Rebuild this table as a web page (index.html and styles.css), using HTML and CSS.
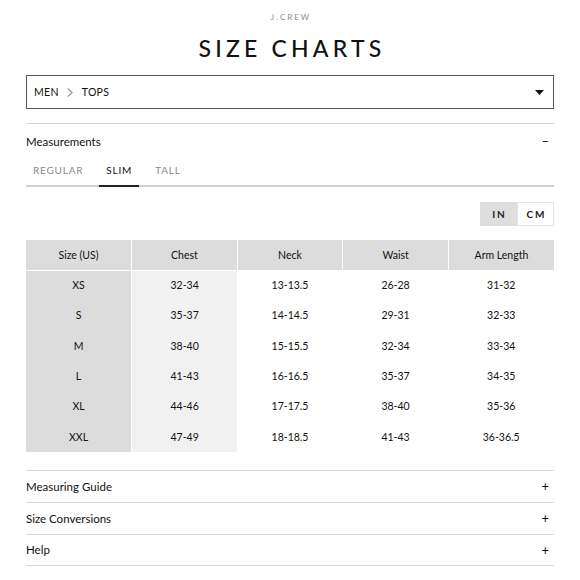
FILE: index.html
```html
<!DOCTYPE html>
<html>
<head>
<meta charset="utf-8">
<link rel="stylesheet" href="styles.css">
</head>
<body>
<div class="page">
  <div class="brand">J.CREW</div>
  <h1 class="title">SIZE CHARTS</h1>
  <div class="select">
    <span class="crumbs">MEN<svg class="chev" width="6" height="9" viewBox="0 0 6 9"><path d="M1 0.5L5 4.5L1 8.5" fill="none" stroke="#333" stroke-width="0.9"/></svg>TOPS</span>
    <svg class="caret" width="9" height="5" viewBox="0 0 9 5"><path d="M0 0h9L4.5 5z" fill="#111"/></svg>
  </div>
  <div class="section open">
    <div class="sec-head"><span>Measurements</span><span class="sign">&#8211;</span></div>
    <div class="tabs">
      <span class="tab">REGULAR</span>
      <span class="tab active">SLIM</span>
      <span class="tab">TALL</span>
    </div>
    <div class="units">
      <span class="unit on">IN</span><span class="unit">CM</span>
    </div>
    <table class="chart">
      <thead>
        <tr><th>Size (US)</th><th>Chest</th><th>Neck</th><th>Waist</th><th>Arm Length</th></tr>
      </thead>
      <tbody>
        <tr><td>XS</td><td>32-34</td><td>13-13.5</td><td>26-28</td><td>31-32</td></tr>
        <tr><td>S</td><td>35-37</td><td>14-14.5</td><td>29-31</td><td>32-33</td></tr>
        <tr><td>M</td><td>38-40</td><td>15-15.5</td><td>32-34</td><td>33-34</td></tr>
        <tr><td>L</td><td>41-43</td><td>16-16.5</td><td>35-37</td><td>34-35</td></tr>
        <tr><td>XL</td><td>44-46</td><td>17-17.5</td><td>38-40</td><td>35-36</td></tr>
        <tr><td>XXL</td><td>47-49</td><td>18-18.5</td><td>41-43</td><td>36-36.5</td></tr>
      </tbody>
    </table>
  </div>
  <div class="acc"><span>Measuring Guide</span><span class="sign">+</span></div>
  <div class="acc"><span>Size Conversions</span><span class="sign">+</span></div>
  <div class="acc"><span>Help</span><span class="sign">+</span></div>
</div>
</body>
</html>
```
FILE: styles.css
```css
* { box-sizing: border-box; }
body {
  margin: 0;
  background: #fff;
  font-family: "Lato", "Noto Sans", sans-serif;
  color: #1a1a1a;
}
.page {
  padding: 0 26px;
}
.brand {
  text-align: center;
  font-size: 8px;
  letter-spacing: 2px;
  color: #8a8a8a;
  padding-top: 12px;
  line-height: 10px;
  padding-left: 2px;
}
.title {
  margin: 0;
  text-align: center;
  font-size: 23px;
  font-weight: 500;
  letter-spacing: 4.2px;
  line-height: 30px;
  margin-top: 11px;
  color: #111;
  padding-left: 4px;
}
.select {
  margin-top: 12px;
  height: 34px;
  border: 1px solid #555;
  display: flex;
  align-items: center;
  justify-content: space-between;
  padding: 0 7px 0 7px;
}
.crumbs {
  font-size: 10.5px;
  letter-spacing: 0.3px;
  color: #111;
  display: flex;
  align-items: center;
}
.chev {
  margin: 0 9px 0 8px;
}
.caret { margin-right: 2px; }
.section {
  margin-top: 14px;
  border-top: 1px solid #d8d8d8;
}
.sec-head, .acc {
  display: flex;
  justify-content: space-between;
  align-items: center;
  font-size: 11.5px;
  color: #111;
  height: 33px;
}
.sec-head { height: 34px; }
.sign {
  font-size: 13px;
  margin-right: 5px;
  font-weight: 400;
}
.tabs {
  display: flex;
  border-bottom: 2px solid #cfcfcf;
  height: 29px;
}
.tab {
  font-size: 10px;
  letter-spacing: 0.8px;
  color: #8a8a8a;
  padding: 6px 7px 0;
  margin-right: 9px;
  height: 29px;
  margin-bottom: -2px;
}
.tab.active {
  color: #111;
  border-bottom: 2px solid #222;
}
.units {
  display: flex;
  justify-content: flex-end;
  margin-top: 15px;
}
.unit {
  width: 37px;
  height: 24px;
  display: flex;
  align-items: center;
  justify-content: center;
  font-size: 10px;
  font-weight: 700;
  letter-spacing: 2px;
  padding-left: 2px;
  border: 1px solid #e4e4e4;
  color: #222;
}
.unit.on {
  background: #dedede;
  border-color: #dedede;
}
.chart {
  margin-top: 14px;
  width: 100%;
  border-collapse: collapse;
  table-layout: fixed;
}
.chart th, .chart td {
  text-align: center;
  font-size: 10.5px;
  color: #111;
  font-weight: 400;
}
.chart th {
  height: 30px;
  background: #dcdcdc;
  border-right: 1px solid #fff;
  border-bottom: 1px solid #fff;
}
.chart th:last-child { border-right: 0; }
.chart td {
  height: 30.3px;
}
.chart td:first-child {
  background: #dcdcdc;
  border-right: 1px solid #fff;
}
.chart td:nth-child(2) {
  background: #f1f1f1;
}
.section + .acc { margin-top: 18px; }
.acc {
  border-top: 1px solid #d8d8d8;
  height: 32px;
}
.acc:last-child {
  border-bottom: 1px solid #d8d8d8;
}
```
